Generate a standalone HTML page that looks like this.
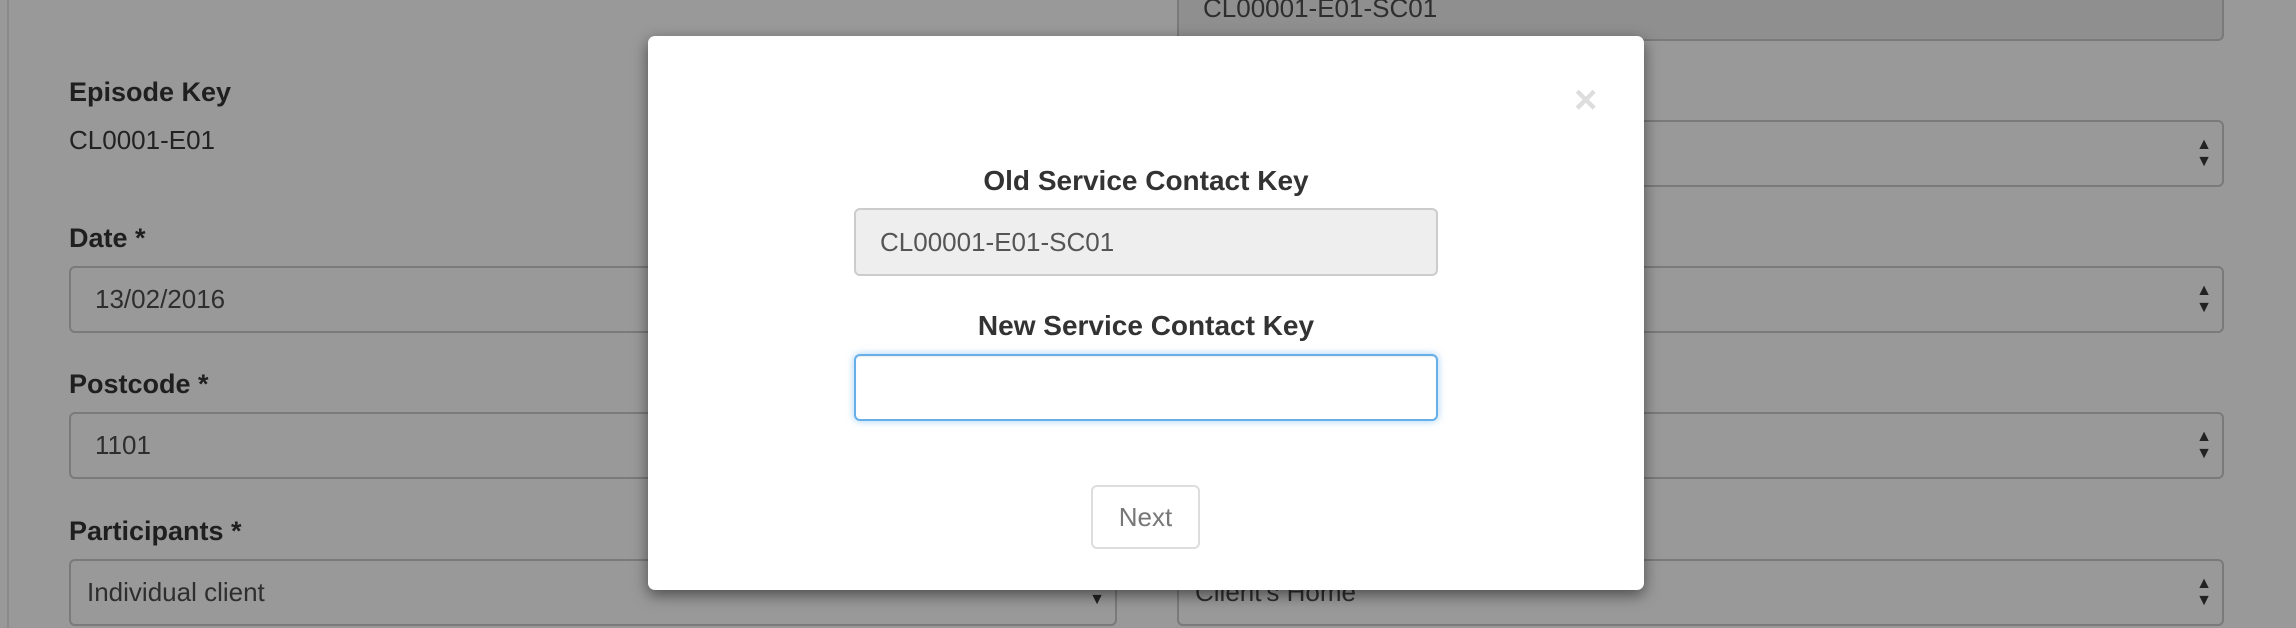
<!DOCTYPE html>
<html><head><meta charset="utf-8"><style>
*{box-sizing:border-box;margin:0;padding:0}
body{width:2296px;height:628px;overflow:hidden;background:#999;font-family:"Liberation Sans",sans-serif;position:relative}
.abs{position:absolute}
.lbl{position:absolute;left:69px;font-weight:bold;font-size:27px;color:#1f1f1f;line-height:30px}
.inp{position:absolute;border:2px solid #7a7a7a;border-radius:6px;background:#999;font-size:26px;color:#2e2e2e;line-height:63px;padding-left:24px}
.arr{position:absolute;right:10px;top:14px;font-size:16px;line-height:17px;color:#222}
</style></head><body>
<div class="abs" style="left:7px;top:0;width:2px;height:628px;background:#8a8a8a"></div>

<div class="lbl" style="top:77px">Episode Key</div>
<div class="abs" style="left:69px;top:125px;font-size:26px;color:#222;line-height:30px">CL0001-E01</div>
<div class="lbl" style="top:223px">Date *</div>
<div class="inp" style="left:69px;top:266px;width:1048px;height:67px">13/02/2016</div>
<div class="lbl" style="top:369px">Postcode *</div>
<div class="inp" style="left:69px;top:412px;width:1048px;height:67px">1101</div>
<div class="lbl" style="top:516px">Participants *</div>
<div class="inp" style="left:69px;top:559px;width:1048px;height:67px;padding-left:16px">Individual client<span class="arr" style="top:30px">▼</span></div>

<div class="inp" style="left:1177px;top:-30px;width:1047px;height:71px;background:#8f8f8f;line-height:58px;padding-top:0"><span style="position:relative;top:7px">CL00001-E01-SC01</span></div>
<div class="inp" style="left:1177px;top:120px;width:1047px;height:67px"><span class="arr">▲<br>▼</span></div>
<div class="inp" style="left:1177px;top:266px;width:1047px;height:67px"><span class="arr">▲<br>▼</span></div>
<div class="inp" style="left:1177px;top:412px;width:1047px;height:67px"><span class="arr">▲<br>▼</span></div>
<div class="inp" style="left:1177px;top:559px;width:1047px;height:67px;padding-left:16px">Client's Home<span class="arr">▲<br>▼</span></div>

<div class="abs" style="left:648px;top:36px;width:996px;height:554px;background:#fff;border-radius:7px;box-shadow:0 5px 15px rgba(0,0,0,.5)">
  <div class="abs" style="left:926px;top:44px;font-size:40px;font-weight:bold;color:#ddd;line-height:40px">×</div>
  <div class="abs" style="left:0;width:996px;top:128px;text-align:center;font-weight:bold;font-size:28px;color:#333;line-height:34px">Old Service Contact Key</div>
  <div class="abs" style="left:206px;top:172px;width:584px;height:68px;background:#eee;border:2px solid #ccc;border-radius:6px;font-size:26px;color:#555;line-height:64px;padding-left:24px">CL00001-E01-SC01</div>
  <div class="abs" style="left:0;width:996px;top:273px;text-align:center;font-weight:bold;font-size:28px;color:#333;line-height:34px">New Service Contact Key</div>
  <div class="abs" style="left:206px;top:318px;width:584px;height:67px;background:#fff;border:2px solid #66afe9;border-radius:6px;box-shadow:inset 0 1px 1px rgba(0,0,0,.075),0 0 8px rgba(102,175,233,.6)"></div>
  <div class="abs" style="left:443px;top:449px;width:109px;height:64px;border:2px solid #ddd;border-radius:6px;font-size:26px;color:#777;text-align:center;line-height:60px">Next</div>
</div>
</body></html>
